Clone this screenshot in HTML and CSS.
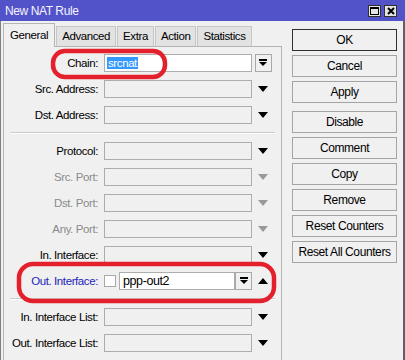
FILE: index.html
```html
<!DOCTYPE html>
<html lang="en">
<head>
    <meta charset="UTF-8">
    <title>New NAT Rule</title>
    <link rel="stylesheet" href="styles.css">
</head>
<body>
    <div class="window">
        <div class="titlebar">
            <span class="title">New NAT Rule</span>
            <div class="tb-buttons">
                <span class="tb-btn">
                    <svg width="9" height="8" viewBox="0 0 9 8"><rect x="0.5" y="0.5" width="8" height="7" fill="none" stroke="#000"/><rect x="0" y="0" width="9" height="2" fill="#000"/></svg>
                </span>
                <span class="tb-btn">
                    <svg width="8" height="8" viewBox="0 0 8 8"><path d="M1 1 L7 7 M7 1 L1 7" stroke="#000" stroke-width="2"/></svg>
                </span>
            </div>
        </div>

        <div class="body">
            <div class="left">
                <div class="tabs">
                    <span class="tab active">General</span>
                    <span class="tab">Advanced</span>
                    <span class="tab">Extra</span>
                    <span class="tab">Action</span>
                    <span class="tab">Statistics</span>
                </div>
                <div class="panel">
                    <div class="row">
                        <label>Chain:</label>
                        <div class="field white"><span class="sel">srcnat</span></div>
                        <span class="cell"><span class="ddbtn"><svg width="8" height="8" viewBox="0 0 8 8"><rect x="0" y="0" width="8" height="2" fill="#000"/><path d="M0 3 L8 3 L4 7 Z" fill="#000"/></svg></span></span>
                    </div>
                    <div class="row">
                        <label>Src. Address:</label>
                        <div class="field"></div>
                        <span class="cell"><svg class="arrow" width="10" height="6" viewBox="0 0 10 6"><path d="M0 0 L10 0 L5 6 Z"/></svg></span>
                    </div>
                    <div class="row">
                        <label>Dst. Address:</label>
                        <div class="field"></div>
                        <span class="cell"><svg class="arrow" width="10" height="6" viewBox="0 0 10 6"><path d="M0 0 L10 0 L5 6 Z"/></svg></span>
                    </div>

                    <div class="sep"></div>

                    <div class="row">
                        <label>Protocol:</label>
                        <div class="field"></div>
                        <span class="cell"><svg class="arrow" width="10" height="6" viewBox="0 0 10 6"><path d="M0 0 L10 0 L5 6 Z"/></svg></span>
                    </div>
                    <div class="row muted">
                        <label>Src. Port:</label>
                        <div class="field"></div>
                        <span class="cell"><svg class="arrow" width="10" height="6" viewBox="0 0 10 6"><path d="M0 0 L10 0 L5 6 Z"/></svg></span>
                    </div>
                    <div class="row muted">
                        <label>Dst. Port:</label>
                        <div class="field"></div>
                        <span class="cell"><svg class="arrow" width="10" height="6" viewBox="0 0 10 6"><path d="M0 0 L10 0 L5 6 Z"/></svg></span>
                    </div>
                    <div class="row muted">
                        <label>Any. Port:</label>
                        <div class="field"></div>
                        <span class="cell"><svg class="arrow" width="10" height="6" viewBox="0 0 10 6"><path d="M0 0 L10 0 L5 6 Z"/></svg></span>
                    </div>
                    <div class="row">
                        <label>In. Interface:</label>
                        <div class="field"></div>
                        <span class="cell"><svg class="arrow" width="10" height="6" viewBox="0 0 10 6"><path d="M0 0 L10 0 L5 6 Z"/></svg></span>
                    </div>
                    <div class="row active">
                        <label>Out. Interface:</label>
                        <div class="combo">
                            <span class="check"></span>
                            <div class="field white short">ppp-out2</div>
                            <span class="ddbtn"><svg width="8" height="8" viewBox="0 0 8 8"><rect x="0" y="0" width="8" height="2" fill="#000"/><path d="M0 3 L8 3 L4 7 Z" fill="#000"/></svg></span>
                        </div>
                        <span class="cell"><svg class="arrow" width="10" height="6" viewBox="0 0 10 6"><path d="M0 6 L10 6 L5 0 Z"/></svg></span>
                    </div>

                    <div class="sep"></div>

                    <div class="row">
                        <label>In. Interface List:</label>
                        <div class="field"></div>
                        <span class="cell"><svg class="arrow" width="10" height="6" viewBox="0 0 10 6"><path d="M0 0 L10 0 L5 6 Z"/></svg></span>
                    </div>
                    <div class="row">
                        <label>Out. Interface List:</label>
                        <div class="field"></div>
                        <span class="cell"><svg class="arrow" width="10" height="6" viewBox="0 0 10 6"><path d="M0 0 L10 0 L5 6 Z"/></svg></span>
                    </div>
                </div>
            </div>

            <div class="side">
                <button class="btn default">OK</button>
                <button class="btn">Cancel</button>
                <button class="btn">Apply</button>
                <button class="btn spaced">Disable</button>
                <button class="btn">Comment</button>
                <button class="btn">Copy</button>
                <button class="btn">Remove</button>
                <button class="btn">Reset Counters</button>
                <button class="btn">Reset All Counters</button>
            </div>
        </div>

        <!-- red hand-drawn marks over the dialog -->
        <svg class="marks" width="405" height="360" viewBox="0 0 405 360">
            <rect x="53" y="51" width="112" height="26" rx="12" />
            <rect x="19" y="264" width="255" height="37" rx="14" />
        </svg>
    </div>
</body>
</html>
```

FILE: styles.css
```css
body {
    margin: 0;
    font-family: "Liberation Sans", Arial, sans-serif;
    font-size: 11.5px;
    letter-spacing: -0.4px;
    background: #f0f0f0;
}
.window {
    position: relative;
    width: 405px;
    height: 360px;
    overflow: hidden;
    background: #f0f0f0;
}
.titlebar {
    height: 21px;
    background: #5353c9;
    color: #f4f4ff;
    font-size: 12px;
    letter-spacing: -0.4px;
    display: flex;
    align-items: center;
    justify-content: space-between;
    padding: 0 8px 0 5px;
}
.tb-buttons {
    display: flex;
    gap: 3px;
}
.tb-btn {
    width: 13px;
    height: 12px;
    box-sizing: border-box;
    border: 1px solid #303030;
    background: #e4e4e4;
    display: flex;
    align-items: center;
    justify-content: center;
}
.body {
    display: flex;
    height: 339px;
    border-left: 1px solid #808080;
    border-right: 2px solid #606060;
}
.left {
    width: 279px;
    padding: 2px 0 0 2px;
}
.tabs {
    display: flex;
    align-items: flex-end;
    height: 23px;
}
.tab {
    height: 19px;
    line-height: 19px;
    padding: 0 5px;
    margin-right: 1px;
    border: 1px solid #c6c6c6;
    border-bottom: none;
    background: #e2e2e2;
    white-space: nowrap;
}
.tab.active {
    height: 23px;
    line-height: 22px;
    padding: 0 6px;
    margin-bottom: -1px;
    background: #f0f0f0;
    border-color: #b5b5b5;
    position: relative;
    z-index: 1;
}
.panel {
    border: 1px solid #b5b5b5;
    border-bottom: none;
    height: 320px;
    padding-top: 7px;
}
.row {
    display: flex;
    align-items: center;
    height: 18px;
    margin-bottom: 8px;
}
.row label {
    width: 94px;
    margin-right: 6px;
    text-align: right;
    white-space: nowrap;
}
.row.muted label {
    color: #8a8a8a;
}
.row.active label {
    color: #2424b8;
}
.field {
    width: 148px;
    height: 18px;
    box-sizing: border-box;
    border: 1px solid #adadad;
    background: #f0f0f0;
    padding-left: 2px;
    line-height: 16px;
}
.field.white {
    background: #fff;
}
.sel {
    background: #3399ff;
    color: #fff;
    padding: 0 1px;
}
.cell {
    width: 18px;
    margin-left: 2px;
    display: flex;
    justify-content: center;
}
.arrow {
    fill: #000;
}
.muted .arrow {
    fill: #999;
}
.ddbtn {
    width: 17px;
    height: 18px;
    box-sizing: border-box;
    border: 1px solid #a8a8a8;
    background: #f0f0f0;
    display: flex;
    align-items: center;
    justify-content: center;
}
.combo {
    width: 148px;
    display: flex;
    align-items: center;
}
.check {
    width: 12px;
    height: 12px;
    box-sizing: border-box;
    border: 1px solid #a8a8a8;
    background: #fff;
    margin-right: 3px;
}
.field.short {
    width: 116px;
    padding-left: 3px;
    font-size: 12.5px;
}
.sep {
    border-top: 1px solid #cbcbcb;
    border-bottom: 1px solid #fff;
    margin: 0 6px 8px 6px;
}
.side {
    width: 105px;
    margin-left: 10px;
    padding-top: 8px;
    display: flex;
    flex-direction: column;
    gap: 4px;
}
.btn {
    height: 22px;
    box-sizing: border-box;
    border: 1px solid #a4a4a4;
    background: #f0f0f0;
    font-family: inherit;
    font-size: 12px;
    letter-spacing: -0.4px;
    padding: 0;
    white-space: nowrap;
}
.btn.default {
    border-color: #303030;
}
.btn.spaced {
    margin-top: 4px;
}
.marks {
    position: absolute;
    left: 0;
    top: 0;
    fill: none;
    stroke: #e4202c;
    stroke-width: 4.5;
}
```
